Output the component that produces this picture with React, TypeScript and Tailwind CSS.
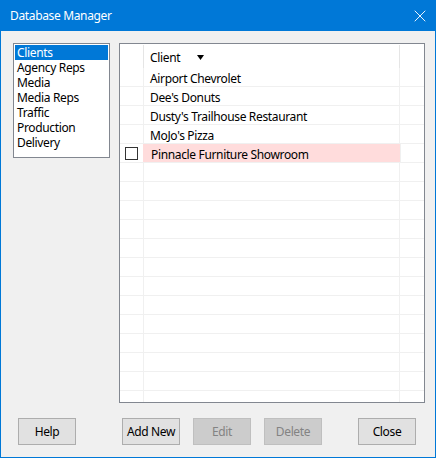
import { X } from "lucide-react";

const categories = ["Clients", "Agency Reps", "Media", "Media Reps", "Traffic", "Production", "Delivery"];

const clients = [
  "Airport Chevrolet",
  "Dee's Donuts",
  "Dusty's Trailhouse Restaurant",
  "MoJo's Pizza",
  "Pinnacle Furniture Showroom",
];

const rows = [...clients, ...Array(13).fill("")];

function Button({ label, disabled }: { label: string; disabled?: boolean }) {
  return (
    <button
      disabled={disabled}
      className={
        disabled
          ? "w-[58px] h-[27px] border border-[#bfbfbf] bg-[#cccccc] text-[#838383]"
          : "w-[58px] h-[27px] border border-[#adadad] bg-[#e1e1e1] text-black"
      }
    >
      {label}
    </button>
  );
}

export default function App() {
  return (
    <div
      className="w-[436px] h-[458px] flex flex-col border border-t-0 border-[#0078d7] bg-[#f0f0f0] text-[12px] tracking-[-0.35px] text-black overflow-hidden"
      style={{ fontFamily: '"Noto Sans", sans-serif' }}
    >
      <div className="h-[31px] shrink-0 bg-[#0078d7] text-white flex items-center justify-between pl-[9px] pr-[5px]">
        <span className="text-[12px]">Database Manager</span>
        <X size={20} strokeWidth={1.1} />
      </div>

      <div className="flex pt-[12px] pl-[12px]">
        <ul className="w-[97px] h-[115px] border border-[#828790] bg-white p-[1px]">
          {categories.map((c, i) => (
            <li
              key={c}
              className={
                i === 0
                  ? "h-[15px] leading-[15px] pl-[2px] bg-[#0078d7] text-white"
                  : "h-[15px] leading-[15px] pl-[2px]"
              }
            >
              {c}
            </li>
          ))}
        </ul>

        <div className="ml-[9px] w-[306px] h-[360px] border border-[#828790] bg-white overflow-hidden">
          <div className="flex h-[24px] items-stretch">
            <div className="w-[24px] border-r border-[#e5e5e5] mt-[1px]" />
            <div className="w-[256px] border-r border-[#e5e5e5] mt-[1px] flex items-center pl-[6px] pt-[2px]">
              <span>Client</span>
              <svg width="7" height="5" viewBox="0 0 7 5" className="ml-[17px]">
                <polygon points="0,0 7,0 3.5,5" fill="#000" />
              </svg>
            </div>
            <div className="flex-1" />
          </div>
          {rows.map((name, i) => {
            const pink = i === 4;
            return (
              <div key={i} className="flex h-[19px] border-b border-[#f0f0f0]">
                <div className={pink ? "w-[25px] flex items-center" : "w-[24px] border-r border-[#f0f0f0]"}>
                  {pink && (
                    <>
                      <span className="ml-[5px] w-[13px] h-[13px] border border-[#333333] bg-white" />
                      <span className="ml-[5px] w-[2px] h-full bg-[#ffdcdc]" />
                    </>
                  )}
                </div>
                <div
                  className={
                    pink
                      ? "w-[256px] pl-[6px] leading-[21px] bg-[#ffdcdc] border-r border-[#f0f0f0]"
                      : "w-[256px] pl-[6px] leading-[21px] border-r border-[#f0f0f0]"
                  }
                >
                  {name}
                </div>
                <div className="flex-1" />
              </div>
            );
          })}
        </div>
      </div>

      <div className="flex mt-[15px] pl-[17px]">
        <Button label="Help" />
        <div className="ml-[46px] flex gap-[13px]">
          <Button label="Add New" />
          <Button label="Edit" disabled />
          <Button label="Delete" disabled />
        </div>
        <div className="ml-[36px]">
          <Button label="Close" />
        </div>
      </div>
    </div>
  );
}
